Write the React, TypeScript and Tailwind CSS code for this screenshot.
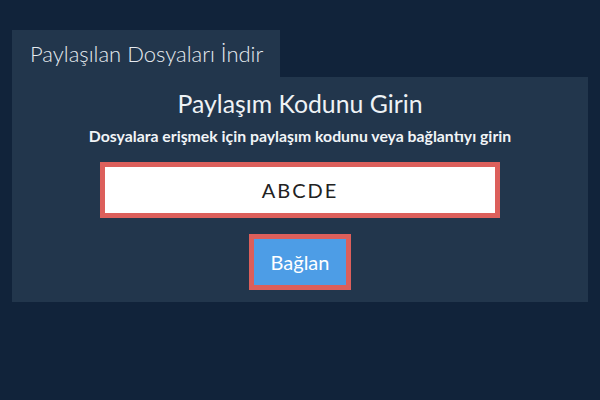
import React, { useState } from 'react';

export default function App() {
  const [code, setCode] = useState('ABCDE');

  return (
    <div className="min-h-screen w-full bg-[#11233a] px-3 pt-[30px]" style={{ fontFamily: 'Lato, "Noto Sans", sans-serif' }}>
      {/* Tab */}
      <div className="inline-flex h-[47px] items-center bg-[#22364c] pl-[18px] pr-[17px]">
        <span className="text-[22px] font-light text-[#e6ebf0]">Paylaşılan Dosyaları İndir</span>
      </div>

      {/* Panel */}
      <div className="flex h-[225px] flex-col items-center bg-[#22364c] pt-[12px]">
        <h1 className="text-[24.8px] leading-[30px] text-[#eef2f5]">Paylaşım Kodunu Girin</h1>
        <p className="mt-[7px] text-[15.8px] font-bold leading-[20px] text-[#f1f4f7]">
          Dosyalara erişmek için paylaşım kodunu veya bağlantıyı girin
        </p>
        <input
          value={code}
          onChange={(e) => setCode(e.target.value)}
          className="mt-[16px] box-border h-[56px] w-[400px] border-[5px] border-[#dc5f5b] bg-white text-center text-[20px] tracking-[2px] text-[#222] outline-none"
        />
        <button className="mt-[16px] box-border h-[56px] w-[102px] border-[5px] border-[#dc5f5b] bg-[#4d9de6] text-[20px] text-white">
          Bağlan
        </button>
      </div>
    </div>
  );
}
